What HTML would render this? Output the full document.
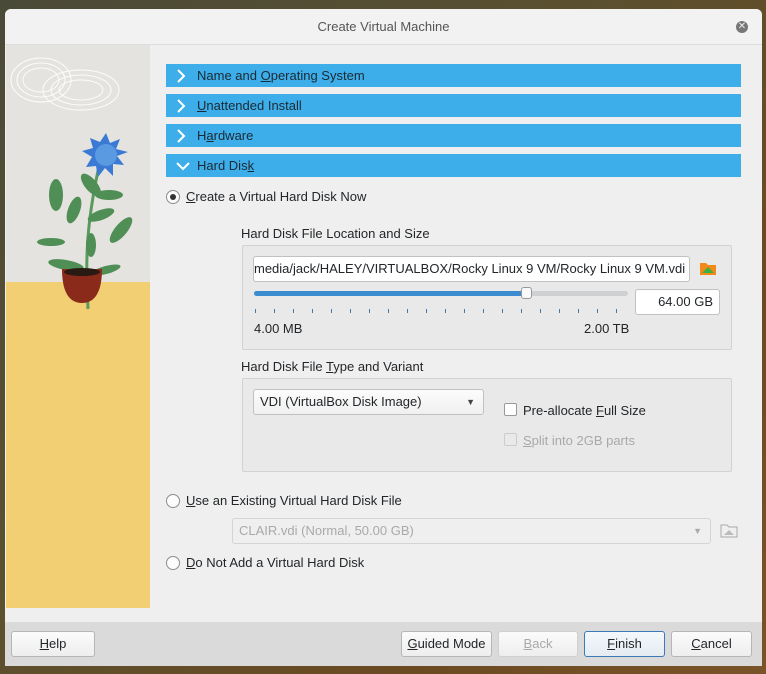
<!DOCTYPE html>
<html><head><style>
*{margin:0;padding:0;box-sizing:border-box}
body{width:766px;height:674px;overflow:hidden;background:linear-gradient(135deg,#4a4a38 0%,#5a5030 40%,#6b4a22 75%,#7a5428 100%);font-family:"Liberation Sans","DejaVu Sans",sans-serif;font-size:13px;color:#232629;position:relative}
.win{position:absolute;left:5px;top:9px;width:757px;height:657px;background:#efefef;border-radius:6px 6px 0 0;overflow:hidden}
.title{position:absolute;left:0;top:0;width:100%;height:36px;background:#f2f2f2;border-bottom:1px solid #ddd;text-align:center;line-height:36px;color:#555;font-size:13px}
.close{position:absolute;right:14px;top:12px;width:12px;height:12px;border-radius:50%;background:#777;color:#eee;font-size:10px;line-height:12px;text-align:center}
.side{position:absolute;left:1px;top:36px;width:144px;height:563px;background:#e4e3e0}
.yellow{position:absolute;left:0;top:237px;width:144px;height:326px;background:#f2cf72}
.sec{position:absolute;left:161px;width:575px;height:23px;background:#3daee9;color:#1b2a33;line-height:23px;padding-left:31px}
.sec svg{position:absolute;left:10px;top:5px}
.abs{position:absolute}
.radio{position:absolute;width:14px;height:14px;border:1px solid #8a8d90;border-radius:50%;background:#fcfcfc}
.radio.on::after{content:"";position:absolute;left:3px;top:3px;width:6px;height:6px;border-radius:50%;background:#333}
.box{position:absolute;border:1px solid #d2d2d2;background:#e9e9e9;border-radius:2px}
.inp{position:absolute;background:#fff;border:1px solid #bfc1c3;border-radius:3px;height:26px;line-height:24px;padding:0 6px;overflow:hidden;white-space:nowrap}
.footer{position:absolute;left:0;top:613px;width:100%;height:44px;background:#dadada}
.btn{position:absolute;top:9px;height:26px;border:1px solid #b4b6b8;border-radius:3px;background:linear-gradient(#fbfbfb,#eeeeee);text-align:center;line-height:24px}
u{text-decoration:underline}
.dis{color:#a8a9aa}
</style></head><body>
<div class="win">
<div class="title">Create Virtual Machine<div class="close">✕</div></div>
<div class="side"><div class="yellow"></div>
<svg class="abs" style="left:0;top:0" width="144" height="270">
<g fill="none" stroke="#fff" stroke-width="1" opacity=".9">
<ellipse cx="35" cy="35" rx="30" ry="22"/><ellipse cx="35" cy="35" rx="24" ry="17"/><ellipse cx="35" cy="35" rx="18" ry="12"/>
<ellipse cx="75" cy="45" rx="38" ry="20"/><ellipse cx="75" cy="45" rx="30" ry="15"/><ellipse cx="75" cy="45" rx="22" ry="10"/></g>
<path d="M82 264 C80 220 78 180 98 100" stroke="#5a9a5a" stroke-width="3" fill="none"/>
<g fill="#4f8f55">
<ellipse cx="50" cy="150" rx="7" ry="16"/><ellipse cx="68" cy="165" rx="6" ry="14" transform="rotate(20 68 165)"/>
<ellipse cx="85" cy="140" rx="6" ry="14" transform="rotate(-40 85 140)"/><ellipse cx="103" cy="150" rx="14" ry="5"/>
<ellipse cx="95" cy="170" rx="14" ry="5" transform="rotate(-20 95 170)"/><ellipse cx="115" cy="185" rx="6" ry="16" transform="rotate(40 115 185)"/>
<ellipse cx="45" cy="197" rx="14" ry="4"/><ellipse cx="60" cy="220" rx="18" ry="5" transform="rotate(10 60 220)"/>
<ellipse cx="100" cy="225" rx="15" ry="4" transform="rotate(-15 100 225)"/><ellipse cx="85" cy="200" rx="5" ry="12"/></g>
<polygon points="100,88 104,98 114,94 110,104 122,107 111,111 118,120 107,119 107,131 99,123 92,132 90,121 80,122 86,112 76,106 87,103 84,93 94,97" fill="#3a7ad4"/>
<circle cx="100" cy="110" r="11" fill="#5a9ae0"/>
<path d="M56 224 L96 224 C96 245 90 258 76 258 C62 258 56 245 56 224Z" fill="#8a2a1a"/>
<ellipse cx="76" cy="227" rx="18" ry="4" fill="#2a1a14"/>
</svg></div>
<div class="sec" style="top:55px"><svg width="10" height="14"><path d="M2 1 L8 7 L2 13" stroke="#fff" stroke-width="2" fill="none"/></svg>Name and <u>O</u>perating System</div>
<div class="sec" style="top:85px"><svg width="10" height="14"><path d="M2 1 L8 7 L2 13" stroke="#fff" stroke-width="2" fill="none"/></svg><u>U</u>nattended Install</div>
<div class="sec" style="top:115px"><svg width="10" height="14"><path d="M2 1 L8 7 L2 13" stroke="#fff" stroke-width="2" fill="none"/></svg>H<u>a</u>rdware</div>
<div class="sec" style="top:145px"><svg width="14" height="14"><path d="M1 4 L7 10 L13 4" stroke="#fff" stroke-width="2" fill="none"/></svg>Hard Dis<u>k</u></div>
<div class="radio on" style="left:161px;top:181px"></div>
<div class="abs" style="left:181px;top:180px"><u>C</u>reate a Virtual Hard Disk Now</div>
<div class="abs" style="left:236px;top:217px">Hard Disk File Location and Size</div>
<div class="box" style="left:237px;top:236px;width:490px;height:105px"></div>
<div class="inp" style="left:248px;top:247px;width:437px;padding-left:0">media/jack/HALEY/VIRTUALBOX/Rocky Linux 9 VM/Rocky Linux 9 VM.vdi</div>
<svg class="abs" style="left:694px;top:251px" width="18" height="16"><path d="M1 3h6l2 2h8v10H1z" fill="#f08a1a"/><path d="M9 7l6 6H3z" fill="#3cb043"/></svg>
<div class="abs" style="left:249px;top:282px;width:374px;height:5px;border-radius:3px;background:#cfd0d1"></div>
<div class="abs" style="left:249px;top:282px;width:272px;height:5px;border-radius:3px;background:#3b8dd0"></div>
<div class="abs" style="left:516px;top:278px;width:11px;height:12px;border:1px solid #999;border-radius:3px;background:#fafafa"></div>
<svg class="abs" style="left:249px;top:300px" width="380" height="6"><g stroke="#3b7bb0" stroke-width="1">
<path d="M1.5 0v4M20.5 0v4M39.5 0v4M58.5 0v4M77.5 0v4M96.5 0v4M115.5 0v4M134.5 0v4M153.5 0v4M172.5 0v4M191.5 0v4M210.5 0v4M229.5 0v4M248.5 0v4M267.5 0v4M286.5 0v4M305.5 0v4M324.5 0v4M343.5 0v4M362.5 0v4"/></g></svg>
<div class="inp" style="left:630px;top:280px;width:85px;text-align:right">64.00 GB</div>
<div class="abs" style="left:249px;top:312px">4.00 MB</div>
<div class="abs" style="left:579px;top:312px">2.00 TB</div>
<div class="abs" style="left:236px;top:350px">Hard Disk File <u>T</u>ype and Variant</div>
<div class="box" style="left:237px;top:369px;width:490px;height:94px"></div>
<div class="inp" style="left:248px;top:380px;width:231px;background:linear-gradient(#fcfcfc,#f0f0f0)">VDI (VirtualBox Disk Image)<span style="position:absolute;right:8px;top:0;font-size:9px;color:#444">▼</span></div>
<div class="abs" style="left:499px;top:394px;width:13px;height:13px;border:1px solid #999;border-radius:2px;background:#fff"></div>
<div class="abs" style="left:518px;top:394px">Pre-allocate <u>F</u>ull Size</div>
<div class="abs" style="left:499px;top:424px;width:13px;height:13px;border:1px solid #ccc;border-radius:2px"></div>
<div class="abs dis" style="left:518px;top:424px"><u>S</u>plit into 2GB parts</div>
<div class="radio" style="left:161px;top:485px"></div>
<div class="abs" style="left:181px;top:484px"><u>U</u>se an Existing Virtual Hard Disk File</div>
<div class="inp dis" style="left:227px;top:509px;width:479px;border-color:#d4d4d4;background:#efefef">CLAIR.vdi (Normal, 50.00 GB)<span style="position:absolute;right:8px;top:0;font-size:9px">▼</span></div>
<svg class="abs" style="left:715px;top:513px" width="18" height="16"><path d="M1 3h6l2 2h8v10H1z" fill="none" stroke="#aaa"/><path d="M9 8l5 5H4z" fill="#bbb"/></svg>
<div class="radio" style="left:161px;top:547px"></div>
<div class="abs" style="left:181px;top:546px"><u>D</u>o Not Add a Virtual Hard Disk</div>
<div class="footer">
<div class="btn" style="left:6px;width:84px"><u>H</u>elp</div>
<div class="btn" style="left:396px;width:91px"><u>G</u>uided Mode</div>
<div class="btn dis" style="left:493px;width:80px;border-color:#d0d0d0"><u>B</u>ack</div>
<div class="btn" style="left:579px;width:81px;border-color:#3a7ab8;background:linear-gradient(#f4f8fb,#e4ecf2)"><u>F</u>inish</div>
<div class="btn" style="left:666px;width:81px"><u>C</u>ancel</div>
</div>
</div>
</body></html>
